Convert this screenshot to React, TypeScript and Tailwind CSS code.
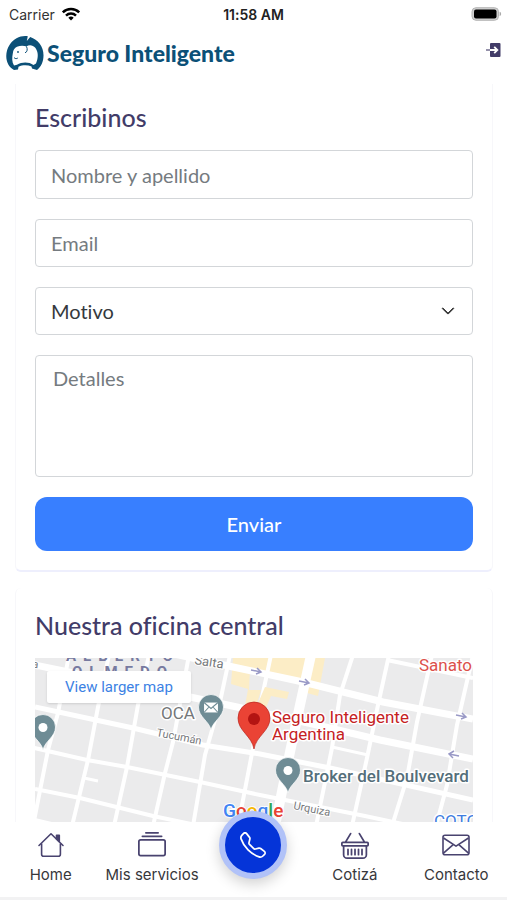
import { BsBasket, BsChevronDown, BsCollection, BsTelephone } from "react-icons/bs";

const fieldClass =
  "w-full rounded-[4px] border-[1px] border-[#d3d6d9] bg-white text-[20px] text-[#35393d] placeholder:text-[#757b80] placeholder:opacity-100 outline-none focus:border-[#387fff]";

const roads = [
  { d: "M0 49L98 70L168 87L225 96L295 110L438 142", width: 5 },
  { d: "M-5 6L155 39L202 49L282 67L345 82L438 101", width: 7 },
  { d: "M130 -6L198 9L268 24L348 44L438 61", width: 7 },
  { d: "M-5 89L52 102L92 109L165 124L225 137L330 158L438 181", width: 4 },
  { d: "M0 131L45 140L118 158L180 171", width: 4 },
  { d: "M-5 161L60 176", width: 4 },
  { d: "M352 2L438 20", width: 4 },
  { d: "M297 89L333 97", width: 3 },
  { d: "M49 120L63 123", width: 3 },
  { d: "M34 -3L23 55L13 92L-2 168", width: 4 },
  { d: "M74 -3L63 49L53 102L37 168", width: 4 },
  { d: "M114 -3L103 47L92 109L79 168", width: 4 },
  { d: "M154 -3L138 84L130 115L118 168", width: 4 },
  { d: "M195 -3L185 44L170 97L158 168", width: 4 },
  { d: "M236 -3L226 44L218 90L203 168", width: 4 },
  { d: "M276 -3L265 47L255 94L240 168", width: 10 },
  { d: "M318 -3L305 37L297 90L281 168", width: 4 },
  { d: "M354 -3L343 47L332 100L317 168", width: 4 },
  { d: "M397 -3L382 64L372 120L357 168", width: 4 },
  { d: "M438 -3L422 67L412 127L401 168", width: 4 },
];

function WifiIcon() {
  return (
    <svg viewBox="0 0 20 14" className="h-[14px] w-5" fill="none" stroke="#000" strokeWidth="2.5" aria-hidden="true">
      <path d="M1.8 5.4a11.6 11.6 0 0 1 16.4 0" />
      <path d="M5 8.6a7.2 7.2 0 0 1 10 0" />
      <path d="M10 13.6l-2.7-2.8a3.9 3.9 0 0 1 5.4 0z" fill="#000" stroke="none" />
    </svg>
  );
}

function BatteryIcon() {
  return (
    <svg viewBox="0 0 31 14" className="h-[14px] w-[31px]" aria-hidden="true">
      <rect x="1" y=".7" width="26.5" height="12.6" rx="4" fill="#d0d0d0" stroke="#b5b5b5" strokeWidth="1" />
      <rect x="3" y="2.6" width="22.5" height="8.8" rx="2" />
      <path d="M28.6 4.8c2 .6 2 3.8 0 4.4z" fill="#aaa" />
    </svg>
  );
}

function LogoMark() {
  return (
    <svg viewBox="0 0 38 36" className="h-9 w-[38px] shrink-0" aria-hidden="true">
      <path
        d="M8 35C-.5 31-2 18.5 3.5 10C8 3 15 .3 21.8 1.3l-1 4.7 3.4-4C32 4.5 37.6 11.5 37.5 20.5c0 6-2.5 11.5-6.5 14.500l-5-1.500-.5-2c-4-1.800-9-1.600-13 .2l-.5 2.800z"
        fill="#0c5077"
      />
      <path
        d="M8 30.500C5.800 27 6 22.500 6.800 18.500c.3-3.500 1.800-6 4.200-6.800 3.500-1.500 7-1.300 9.500-.2 2.500-2 6.500-1.500 8.800 1.300 3.200 4.300 3.200 10 .7 15.700l-2.500 1.500c-4.500-3.300-11.500-3.300-16.500-.3z"
        fill="#fff"
      />
      <path d="M20.500 11.500c1.200 2.500 1 5.500-1.500 6.300M8 22.500c1 1.300 2.600 1.500 3.800.5" fill="none" stroke="#0c5077" strokeWidth="1" />
      <circle cx="12" cy="17" r=".9" fill="#0c5077" />
    </svg>
  );
}

function LoginIcon() {
  return (
    <svg viewBox="0 0 16 16" className="size-4" aria-hidden="true">
      <rect x="5" y="1" width="10.5" height="14" rx="1" fill="#423c68" />
      <path d="M1 8h4" stroke="#8985a1" strokeWidth="1.8" />
      <path d="M5 8h7M9.2 4.8L12.4 8l-3.2 3.2" fill="none" stroke="#fff" strokeWidth="1.8" />
    </svg>
  );
}

function HouseIcon() {
  return (
    <svg viewBox="0 0 28 28" className="size-7" fill="none" stroke="#49436f" strokeWidth="1.6" strokeLinejoin="round" aria-hidden="true">
      <path d="M2 14.5L14 2.8l12 11.7" strokeLinecap="round" />
      <path d="M4.6 12.5v10.8c0 1.2.8 2 2 2h14.8c1.2 0 2-.8 2-2V12.5" />
      <path d="M19.5 4.2h2.8v6.4l-2.8-2.7z" fill="#49436f" />
    </svg>
  );
}

function EnvelopeIcon() {
  return (
    <svg viewBox="0 0 28 28" className="size-7" fill="none" stroke="#49436f" strokeWidth="1.6" strokeLinejoin="round" aria-hidden="true">
      <rect x="1" y="4.300" width="26" height="19.400" rx="2" />
      <path d="M1.500 7L14 15.200 26.500 7M1.500 22.200l9.700-8.600M26.500 22.200l-9.700-8.600" />
    </svg>
  );
}

function Pin({ x, y, mail }: { x: number; y: number; mail?: boolean }) {
  return (
    <g transform={`translate(${x} ${y})`}>
      <path d="M0 0C-1.8-9-12.5-13-12.5-23a12.5 12.5 0 0 1 25 0C12.5-13 1.8-9 0 0z" fill="#6f8c95" stroke="#fff" strokeWidth=".7" />
      {mail ? (
        <g fill="#fff" stroke="#6f8c95" strokeWidth="1.1">
          <rect x="-7.5" y="-28" width="15" height="11" />
          <path d="M-7-27.5l7 6 7-6M-7-17.5l5-5.5M7-17.5l-5-5.5" fill="none" />
        </g>
      ) : (
        <circle cy="-22.5" r="4.5" fill="#fff" />
      )}
    </g>
  );
}

function OfficeMap() {
  return (
    <div className="relative h-[200px] overflow-hidden bg-[#ebebec]">
      <svg viewBox="0 0 438 200" preserveAspectRatio="xMidYMin slice" className="size-full font-[Roboto,sans-serif]" role="img" aria-label="Mapa">
        <path d="M198 0h92l-7 38-11-3 3-12-60-12-1 21h12l-9 30-9-2 5-29-17-5z" fill="#fcedc6" />
        <g fill="none" stroke="#fff">
          {roads.map((road) => (
            <path key={road.d} d={road.d} strokeWidth={road.width} />
          ))}
        </g>
        <path d="M230 29l24 5-2 7-16-3-7 16-9-2z" fill="#fcedc6" />
        <g fill="none" stroke="#9999c6" strokeWidth="1.5">
          <path d="M216 12l10 2m-4-4l4 4-5 2M264 23l10 2m-4-4l4 4-5 2M421 57l10 2m-4-4l4 4-5 2M424 98l-10-2m5-3l-5 3 4 4" />
        </g>
        <g fill="#777aa0" fontSize="15" fontWeight="700" letterSpacing="7">
          <text x="31" y="3">ALBERTO</text>
          <text x="37" y="19">OLMEDO</text>
        </g>
        <g fill="#77797c" stroke="#fff" strokeWidth="2" paintOrder="stroke" fontSize="11">
          <text x="-3" y="10" transform="rotate(8 0 10)">a</text>
          <text x="159" y="6" fontSize="13" transform="rotate(9 159 6)">Salta</text>
          <text x="121" y="78" transform="rotate(11 121 78)">Tucumán</text>
          <text x="258" y="151" transform="rotate(11 258 151)">Urquiza</text>
        </g>
        <Pin x={8} y={92} />
        <Pin x={176} y={72} mail />
        <Pin x={253} y={135} />
        <path d="M219 91C217 78 203 73 203 60a16 16 0 0 1 32 0c0 13-14 18-16 31z" fill="#ea4335" stroke="#b9241c" strokeWidth=".7" />
        <circle cx="219" cy="61" r="6" fill="#b31412" />
        <g fontSize="17" fontWeight="400" stroke="#fff" strokeWidth="3" paintOrder="stroke" strokeLinejoin="round">
          <text x="126" y="61" fill="#747779">OCA</text>
          <g fill="#c5221f">
            <text x="237" y="65">Seguro Inteligente</text>
            <text x="237" y="82">Argentina</text>
          </g>
          <text x="268" y="124" fill="#546e7a" fontWeight="500">Broker del Boulvevard</text>
          <text x="384" y="13" fill="#dc514b">Sanato</text>
          <text x="399" y="169" fill="#3f7de0">COTO</text>
        </g>
        <text x="188" y="159" fontSize="19" stroke="#fff" strokeWidth="2" paintOrder="stroke" fontWeight="500">
          <tspan fill="#4285f4">G</tspan>
          <tspan fill="#ea4335">o</tspan>
          <tspan fill="#fbbc04">o</tspan>
          <tspan fill="#4285f4">g</tspan>
          <tspan fill="#34a853">l</tspan>
          <tspan fill="#ea4335">e</tspan>
        </text>
      </svg>
      <a href="#mapa" className="absolute top-[13px] left-3 rounded-[2px] bg-white px-[18px] py-2 font-[Roboto,sans-serif] text-[15px] leading-4 text-[#3c82e4] shadow-sm">
        View larger map
      </a>
    </div>
  );
}

const navItems = [
  { label: "Home", href: "#home", icon: <HouseIcon /> },
  { label: "Mis servicios", href: "#servicios", icon: <BsCollection className="size-7" /> },
  null,
  { label: "Cotizá", href: "#cotiza", icon: <BsBasket className="size-7" /> },
  { label: "Contacto", href: "#contacto", icon: <EnvelopeIcon /> },
];

function BottomNav() {
  return (
    <nav className="relative grid h-[78px] shrink-0 grid-cols-5 border-b-[3px] border-[#f2f2f3] bg-white font-[Inter,sans-serif]">
      {navItems.map((item) =>
        item ? (
          <a key={item.label} href={item.href} className="flex flex-col items-center gap-[6px] pt-[9px] text-[#49436f]">
            {item.icon}
            <span className="text-[15px] leading-5 whitespace-nowrap text-[#37373b]">{item.label}</span>
          </a>
        ) : (
          <div key="call" className="flex justify-center">
            <a
              href="tel:"
              aria-label="Llamar"
              className="-mt-[11px] flex size-[68px] items-center justify-center rounded-full border-[6px] border-[#b1c2f8] bg-[#0534d8] text-white shadow-[0_5px_14px_rgba(0,0,0,0.18)]"
            >
              <BsTelephone className="size-[26px]" />
            </a>
          </div>
        )
      )}
    </nav>
  );
}

export default function App() {
  return (
    <div className="flex h-screen flex-col bg-white font-[Lato,sans-serif] [font-variant-ligatures:none]">
      <div className="grid h-7 shrink-0 grid-cols-3 items-center px-[9px] font-[Inter,sans-serif] text-[14px] text-[#333]">
        <div className="flex items-center gap-[6px]">
          <span>Carrier</span>
          <WifiIcon />
        </div>
        <span className="text-center font-semibold whitespace-nowrap text-[#222]">11:58 AM</span>
        <div className="-mr-1 flex justify-end">
          <BatteryIcon />
        </div>
      </div>

      <header className="flex h-14 shrink-0 items-start justify-between px-[6px] pt-[7px]">
        <a href="#home" className="flex items-center gap-[3px] text-[#0c5077]">
          <LogoMark />
          <span className="text-[23px] leading-9 font-black">Seguro Inteligente</span>
        </a>
        <button type="button" aria-label="Ingresar" className="mt-[7px]">
          <LoginIcon />
        </button>
      </header>

      <main className="flex min-h-0 flex-1 flex-col gap-4 overflow-y-auto pr-[14px] pl-[15px] [scrollbar-width:none]">
        <section className="shrink-0 rounded-b-md border-x border-b-2 border-x-[#f7f7fa] border-b-[#eeeffd] px-[19px] pb-[19px]">
          <h2 className="py-[17px] text-[25px] leading-8 font-medium text-[#423c68]">Escribinos</h2>
          <form className="flex flex-col gap-5" onSubmit={(e) => e.preventDefault()}>
            <input aria-label="Nombre y apellido" placeholder="Nombre y apellido" className={`${fieldClass} h-[49px] px-[15px]`} />
            <input type="email" aria-label="Email" placeholder="Email" className={`${fieldClass} h-[48px] px-[15px]`} />
            <div className="relative">
              <select aria-label="Motivo" className={`${fieldClass} block h-[48px] appearance-none px-[15px]`}>
                <option>Motivo</option>
              </select>
              <BsChevronDown className="pointer-events-none absolute top-[17px] right-[18px] size-[14px] stroke-1 text-[#333]" />
            </div>
            <textarea aria-label="Detalles" placeholder="Detalles" className={`${fieldClass} block h-[122px] resize-none px-[17px] py-2 leading-7`} />
            <button type="submit" className="h-[54px] rounded-xl bg-[#387fff] text-[20px] font-medium text-white">
              Enviar
            </button>
          </form>
        </section>

        <section className="shrink-0 rounded-md border-x border-[#f7f7fa] px-[19px] pb-5">
          <h2 className="pt-[21px] pb-[17px] text-[25px] leading-8 font-medium text-[#423c68]">Nuestra oficina central</h2>
          <OfficeMap />
        </section>
      </main>

      <BottomNav />
    </div>
  );
}
